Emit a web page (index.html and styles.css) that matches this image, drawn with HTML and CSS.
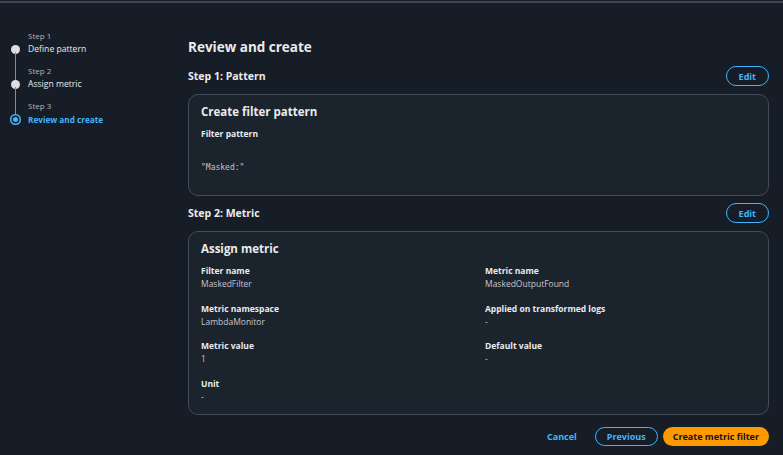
FILE: index.html
```html
<!DOCTYPE html>
<html>
<head>
<meta charset="utf-8">
<link rel="stylesheet" href="styles.css">
</head>
<body>
<div class="topline"></div>
<div class="layout">
  <nav class="steps">
    <div class="step done">
      <div class="step-small">Step 1</div>
      <div class="step-row"><span class="dot"></span><span class="step-name">Define pattern</span></div>
    </div>
    <div class="step done">
      <div class="step-small">Step 2</div>
      <div class="step-row"><span class="dot"></span><span class="step-name">Assign metric</span></div>
    </div>
    <div class="step active">
      <div class="step-small">Step 3</div>
      <div class="step-row"><span class="dot ring"></span><span class="step-name">Review and create</span></div>
    </div>
  </nav>
  <main class="main">
    <h1 class="title">Review and create</h1>
    <div class="section-head">
      <h2>Step 1: Pattern</h2>
      <button class="btn btn-outline">Edit</button>
    </div>
    <section class="card card1">
      <h3>Create filter pattern</h3>
      <div class="label">Filter pattern</div>
      <div class="code">"Masked:"</div>
    </section>
    <div class="section-head second">
      <h2>Step 2: Metric</h2>
      <button class="btn btn-outline">Edit</button>
    </div>
    <section class="card card2">
      <h3>Assign metric</h3>
      <div class="grid">
        <div class="kv"><div class="label">Filter name</div><div class="value">MaskedFilter</div></div>
        <div class="kv"><div class="label">Metric name</div><div class="value">MaskedOutputFound</div></div>
        <div class="kv"><div class="label">Metric namespace</div><div class="value">LambdaMonitor</div></div>
        <div class="kv"><div class="label">Applied on transformed logs</div><div class="value">-</div></div>
        <div class="kv"><div class="label">Metric value</div><div class="value">1</div></div>
        <div class="kv"><div class="label">Default value</div><div class="value">-</div></div>
        <div class="kv"><div class="label">Unit</div><div class="value">-</div></div>
      </div>
    </section>
    <div class="actions">
      <button class="btn btn-link">Cancel</button>
      <button class="btn btn-outline btn-prev">Previous</button>
      <button class="btn btn-primary">Create metric filter</button>
    </div>
  </main>
</div>
</body>
</html>
```

FILE: styles.css
```css
* { box-sizing: border-box; }
html, body { margin: 0; padding: 0; }
body {
  background: #161d26;
  color: #e9ebed;
  font-family: "Open Sans", "Noto Sans", sans-serif;
  width: 783px;
  height: 455px;
  overflow: hidden;
}
.topline {
  margin-top: 1px;
  height: 2px;
  background: #3f4651;
}
.layout {
  display: grid;
  grid-template-columns: 188px 1fr;
  padding-right: 14px;
}
.steps {
  padding: 27px 0 0 11px;
}
.step { position: relative; }
.step + .step { margin-top: 9px; }
.step.done::after {
  content: "";
  position: absolute;
  left: 4px;
  top: 22px;
  width: 1px;
  height: 34px;
  background: #8c8c94;
}
.step-small {
  font-size: 8px;
  line-height: 11px;
  color: #b4b4bb;
  padding-left: 17px;
}
.step-row {
  display: flex;
  align-items: center;
  gap: 8px;
  margin-top: 1px;
  height: 14px;
}
.dot {
  width: 9px;
  height: 9px;
  border-radius: 50%;
  background: #dedee3;
  flex: none;
}
.dot.ring {
  width: 11px;
  height: 11px;
  margin-left: -1px;
  margin-right: -1px;
  background: #42b4ff;
  box-shadow: inset 0 0 0 1.5px #42b4ff, inset 0 0 0 3px #161d26;
}
.step-name {
  font-size: 8.6px;
  line-height: 13px;
  color: #e9ebed;
}
.step.active .step-name {
  color: #42b4ff;
  font-weight: 700;
  font-size: 8.2px;
}
.main {
  padding-top: 34px;
}
.title {
  margin: 0;
  font-size: 13.5px;
  line-height: 20px;
  font-weight: 700;
}
.section-head {
  display: flex;
  align-items: center;
  justify-content: space-between;
  margin-top: 8px;
  height: 22px;
}
.section-head.second { margin-top: 6px; }
.section-head h2 {
  margin: 0;
  font-size: 10.5px;
  font-weight: 700;
}
.btn {
  font-family: inherit;
  font-weight: 700;
  font-size: 9px;
  cursor: pointer;
  background: none;
  border: none;
}
.btn-outline {
  border: 1.5px solid #42b4ff;
  color: #42b4ff;
  border-radius: 12px;
  height: 20px;
  padding: 0 12px;
}
.card {
  margin-top: 7px;
  background: #1b232d;
  border: 1px solid #414d5c;
  border-radius: 10px;
  padding: 8px 12px 13px;
}
.card h3 {
  margin: 0;
  font-size: 11.5px;
  line-height: 17px;
  font-weight: 700;
}
.card1 { height: 102px; }
.label {
  font-size: 8.5px;
  font-weight: 700;
  line-height: 12px;
  color: #e9ebed;
  margin-top: 8px;
}
.code {
  font-family: "DejaVu Sans Mono", monospace;
  font-size: 8px;
  color: #c6c6cd;
  margin-top: 23px;
}
.card2 { height: 184px; }
.grid {
  display: grid;
  grid-template-columns: 284px 1fr;
  row-gap: 12.5px;
  margin-top: 8px;
}
.kv .label { margin-top: 0; }
.value {
  font-size: 8.5px;
  line-height: 13px;
  color: #c6c6cd;
}
.actions {
  display: flex;
  justify-content: flex-end;
  align-items: center;
  margin-top: 12px;
  gap: 5px;
}
.btn-link {
  color: #42b4ff;
  padding: 0 13px 0 0;
}
.btn-prev { height: 19px; padding: 0 11px; }
.btn-primary {
  background: #ff9900;
  color: #0f141a;
  border-radius: 12px;
  height: 19px;
  padding: 0 10px;
}
```
